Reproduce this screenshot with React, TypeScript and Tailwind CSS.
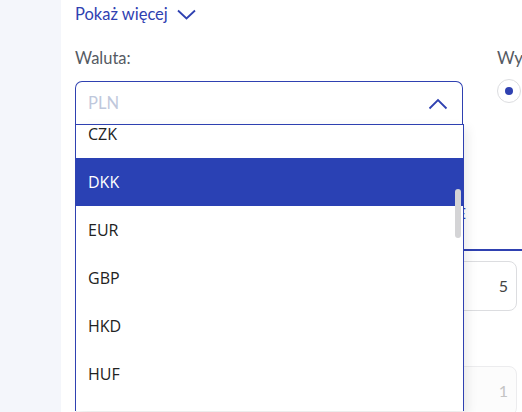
import React from "react";

const items = ["CZK", "DKK", "EUR", "GBP", "HKD", "HUF", "INR"];

export default function App() {
  return (
    <div className="flex w-[522px] h-[412px] overflow-hidden bg-white" style={{ fontFamily: "Lato, 'Open Sans', sans-serif" }}>
      <div className="w-[61px] shrink-0 bg-[#f4f6fb]" />
      <div className="relative flex-1 pl-[14px] pt-[3px]">
        <button className="flex items-center gap-[9px] text-[16.5px] text-[#2f41b1] leading-[22px]">
          Pokaż więcej
          <svg width="19" height="11" viewBox="0 0 19 11" fill="none">
            <path d="M1 1.5L9.5 9.5L18 1.5" stroke="#2f41b1" strokeWidth="1.8" />
          </svg>
        </button>
        <div className="mt-[22px] flex gap-[34px]">
          <div className="w-[388px] shrink-0">
            <div className="text-[16.5px] text-[#555a63] leading-[22px]">Waluta:</div>
            <div className="mt-[12px] h-[44px] rounded-t-[7px] border border-b-0 border-[#2f41b1] flex items-center justify-between pl-[12px] pr-[14px]">
              <span className="text-[16.5px] text-[#bfc8dc]">PLN</span>
              <svg width="20" height="12" viewBox="0 0 20 12" fill="none">
                <path d="M1.5 10.5L10 2L18.5 10.5" stroke="#2f41b1" strokeWidth="1.8" />
              </svg>
            </div>
          </div>
          <div className="shrink-0">
            <div className="text-[17px] text-[#555a63] leading-[22px] whitespace-nowrap">Wysyłka:</div>
            <div className="mt-[10px] w-[24px] h-[24px] rounded-full border border-[#dcdde0] flex items-center justify-center">
              <div className="w-[8px] h-[8px] rounded-full bg-[#2f41b1]" />
            </div>
          </div>
        </div>
        <div className="mt-[78px] w-[447px] border-b-2 border-[#2f41b1] flex justify-end pr-[56px]">
          <span className="text-[15px] text-[#2f41b1] leading-[20px] pb-[26px]">Dane E</span>
        </div>
        <div className="mt-[10px] w-[442px] h-[50px] rounded-[8px] border border-[#dcdde0] flex items-center justify-end pr-[8px] text-[16px] text-[#444]">
          5
        </div>
        <div className="mt-[55px] w-[442px] h-[50px] rounded-[8px] border border-[#ececee] bg-[#fcfcfc] flex items-center justify-end pr-[8px] text-[16px] text-[#c4c4c4]">
          1
        </div>

        <div className="absolute left-[14px] top-[124px] w-[389px] h-[287px] bg-white border-x border-t border-[#2f41b1] overflow-hidden shadow-[4px_4px_10px_rgba(0,0,0,0.08)]">
          <div className="-mt-[15px]" style={{ fontFamily: "'Open Sans', sans-serif" }}>
            {items.map((c) => (
              <div
                key={c}
                className={
                  c === "DKK"
                    ? "h-[48px] flex items-center pl-[12px] text-[16px] bg-[#2a41b4] text-white"
                    : "h-[48px] flex items-center pl-[12px] text-[16px] text-[#222]"
                }
              >
                {c}
              </div>
            ))}
          </div>
          <div className="absolute right-[2px] top-[64px] w-[6px] h-[49px] rounded-full bg-[#d4d4d6]" />
        </div>
      </div>
    </div>
  );
}
